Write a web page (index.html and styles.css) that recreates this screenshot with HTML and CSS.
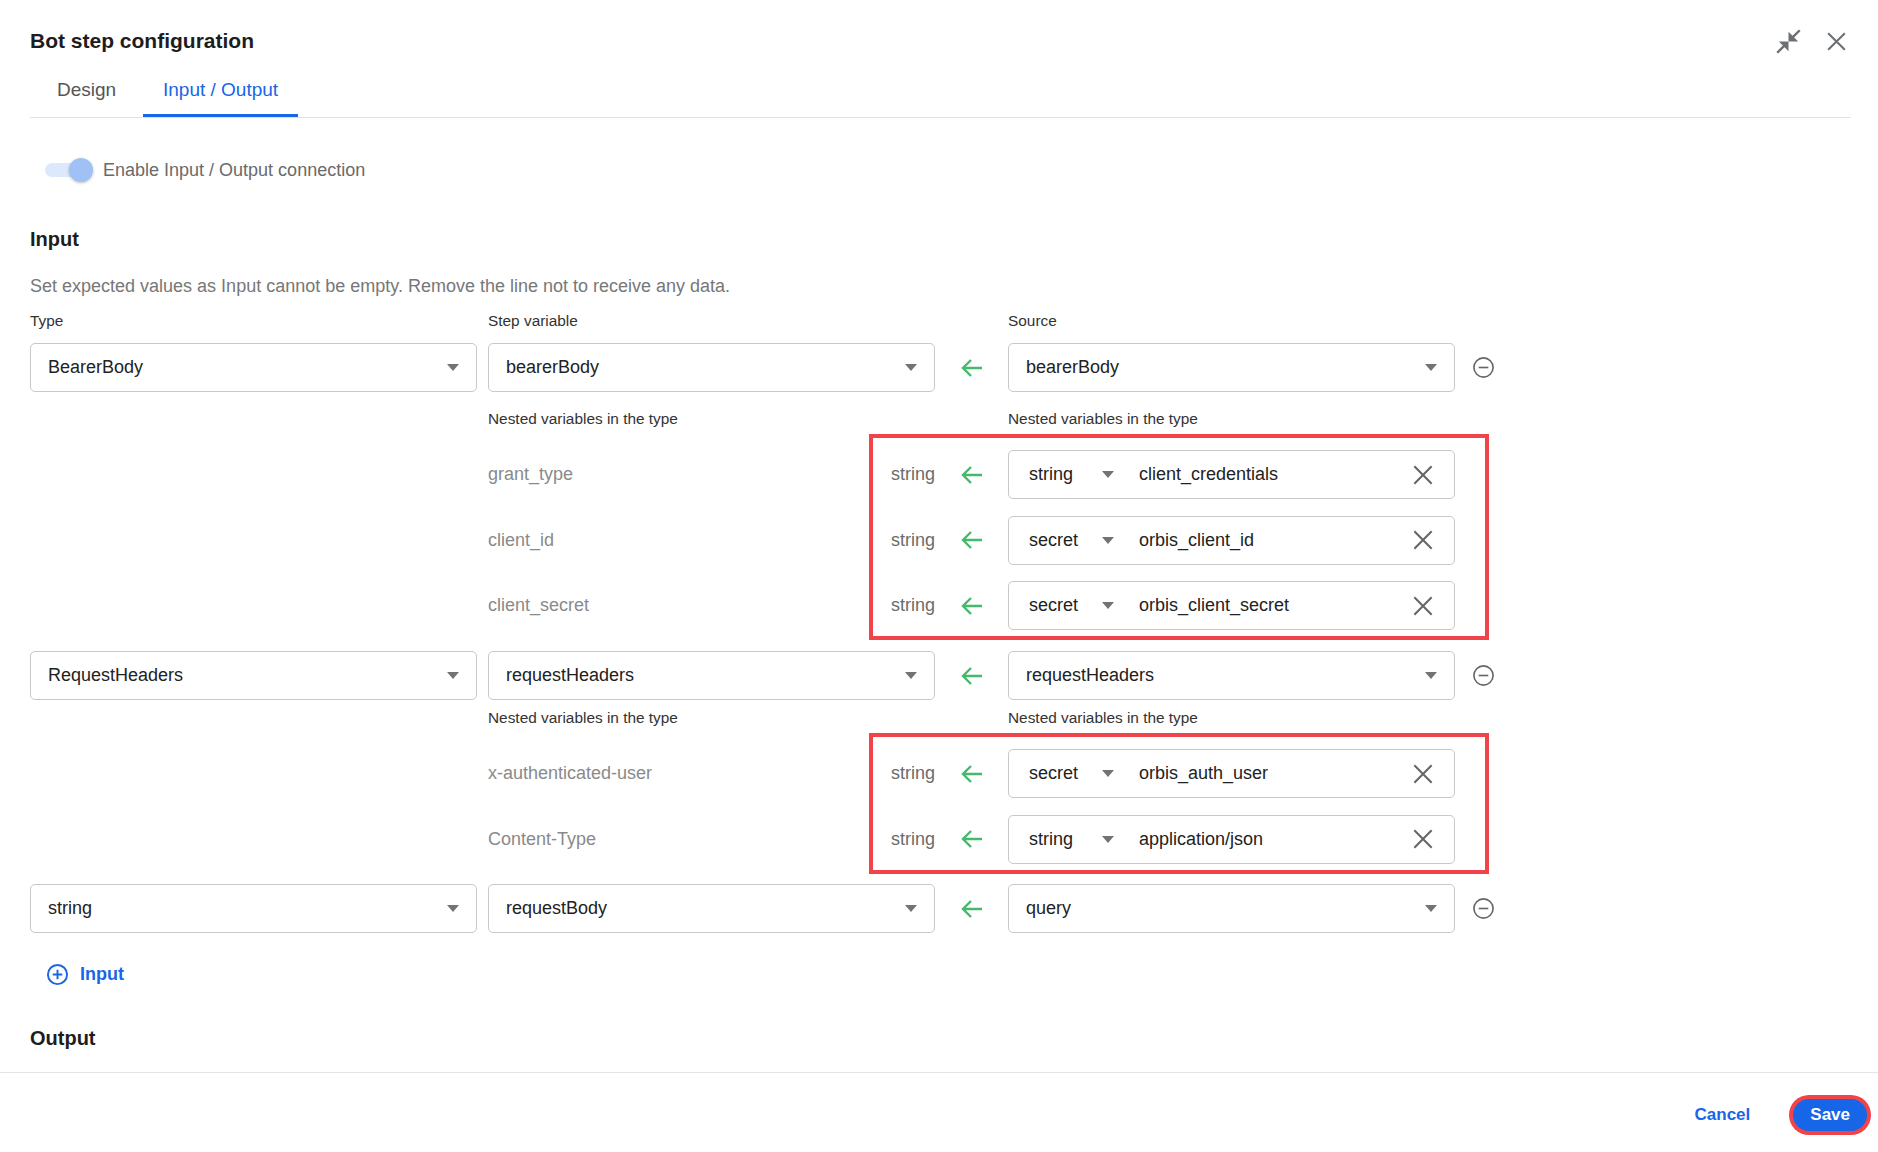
FILE: index.html
```html
<!DOCTYPE html>
<html lang="en">
<head>
  <meta charset="UTF-8">
  <title>Bot step configuration</title>
  <link rel="stylesheet" href="styles.css">
</head>
<body>
  <div class="dialog">
    <div class="content">
      <div class="header">
        <h1>Bot step configuration</h1>
        <div class="header-actions">
          <svg class="icon-compress" viewBox="0 0 24 24"><path d="M22 3.41L16.71 8.7 20 12h-8V4l3.29 3.29L20.59 2 22 3.41zM3.41 22l5.29-5.29L12 20v-8H4l3.29 3.29L2 20.59 3.41 22z"/></svg>
          <svg class="icon-close" viewBox="0 0 24 24"><path d="M4 4L20 20M20 4L4 20"/></svg>
        </div>
      </div>

      <div class="tabs">
        <div class="tab">Design</div>
        <div class="tab active">Input / Output</div>
      </div>

      <div class="toggle-row">
        <span class="toggle"><span class="knob"></span></span>
        <span class="toggle-label">Enable Input / Output connection</span>
      </div>

      <h2>Input</h2>
      <p class="hint">Set expected values as Input cannot be empty. Remove the line not to receive any data.</p>

      <div class="io-row io-head">
        <span>Type</span>
        <span>Step variable</span>
        <span></span>
        <span>Source</span>
        <span></span>
      </div>

      <!-- BearerBody -->
      <div class="io-row main-row">
        <div class="select"><span>BearerBody</span><i class="caret"></i></div>
        <div class="select"><span>bearerBody</span><i class="caret"></i></div>
        <svg class="arrow" viewBox="0 0 22 20"><path d="M21 10H2M10 2L2 10l8 8"/></svg>
        <div class="select"><span>bearerBody</span><i class="caret"></i></div>
        <svg class="remove" viewBox="0 0 24 24"><circle cx="12" cy="12" r="10"/><path d="M7 12h10"/></svg>
      </div>

      <div class="nested">
        <div class="io-row nested-head">
          <span></span>
          <span>Nested variables in the type</span>
          <span></span>
          <span>Nested variables in the type</span>
          <span></span>
        </div>
        <div class="io-row nested-row">
          <span></span>
          <div class="var"><span class="var-name">grant_type</span><span class="var-type">string</span></div>
          <svg class="arrow" viewBox="0 0 22 20"><path d="M21 10H2M10 2L2 10l8 8"/></svg>
          <div class="field">
            <span class="kind">string</span><i class="caret"></i>
            <span class="value">client_credentials</span>
            <svg class="clear" viewBox="0 0 24 24"><path d="M4 4L20 20M20 4L4 20"/></svg>
          </div>
          <span></span>
        </div>
        <div class="io-row nested-row">
          <span></span>
          <div class="var"><span class="var-name">client_id</span><span class="var-type">string</span></div>
          <svg class="arrow" viewBox="0 0 22 20"><path d="M21 10H2M10 2L2 10l8 8"/></svg>
          <div class="field">
            <span class="kind">secret</span><i class="caret"></i>
            <span class="value">orbis_client_id</span>
            <svg class="clear" viewBox="0 0 24 24"><path d="M4 4L20 20M20 4L4 20"/></svg>
          </div>
          <span></span>
        </div>
        <div class="io-row nested-row">
          <span></span>
          <div class="var"><span class="var-name">client_secret</span><span class="var-type">string</span></div>
          <svg class="arrow" viewBox="0 0 22 20"><path d="M21 10H2M10 2L2 10l8 8"/></svg>
          <div class="field">
            <span class="kind">secret</span><i class="caret"></i>
            <span class="value">orbis_client_secret</span>
            <svg class="clear" viewBox="0 0 24 24"><path d="M4 4L20 20M20 4L4 20"/></svg>
          </div>
          <span></span>
        </div>
        <div class="mark"></div>
      </div>

      <!-- RequestHeaders -->
      <div class="io-row main-row">
        <div class="select"><span>RequestHeaders</span><i class="caret"></i></div>
        <div class="select"><span>requestHeaders</span><i class="caret"></i></div>
        <svg class="arrow" viewBox="0 0 22 20"><path d="M21 10H2M10 2L2 10l8 8"/></svg>
        <div class="select"><span>requestHeaders</span><i class="caret"></i></div>
        <svg class="remove" viewBox="0 0 24 24"><circle cx="12" cy="12" r="10"/><path d="M7 12h10"/></svg>
      </div>

      <div class="nested nested-tight">
        <div class="io-row nested-head">
          <span></span>
          <span>Nested variables in the type</span>
          <span></span>
          <span>Nested variables in the type</span>
          <span></span>
        </div>
        <div class="io-row nested-row">
          <span></span>
          <div class="var"><span class="var-name">x-authenticated-user</span><span class="var-type">string</span></div>
          <svg class="arrow" viewBox="0 0 22 20"><path d="M21 10H2M10 2L2 10l8 8"/></svg>
          <div class="field">
            <span class="kind">secret</span><i class="caret"></i>
            <span class="value">orbis_auth_user</span>
            <svg class="clear" viewBox="0 0 24 24"><path d="M4 4L20 20M20 4L4 20"/></svg>
          </div>
          <span></span>
        </div>
        <div class="io-row nested-row">
          <span></span>
          <div class="var"><span class="var-name">Content-Type</span><span class="var-type">string</span></div>
          <svg class="arrow" viewBox="0 0 22 20"><path d="M21 10H2M10 2L2 10l8 8"/></svg>
          <div class="field">
            <span class="kind">string</span><i class="caret"></i>
            <span class="value">application/json</span>
            <svg class="clear" viewBox="0 0 24 24"><path d="M4 4L20 20M20 4L4 20"/></svg>
          </div>
          <span></span>
        </div>
        <div class="mark"></div>
      </div>

      <!-- requestBody -->
      <div class="io-row main-row last-row">
        <div class="select"><span>string</span><i class="caret"></i></div>
        <div class="select"><span>requestBody</span><i class="caret"></i></div>
        <svg class="arrow" viewBox="0 0 22 20"><path d="M21 10H2M10 2L2 10l8 8"/></svg>
        <div class="select"><span>query</span><i class="caret"></i></div>
        <svg class="remove" viewBox="0 0 24 24"><circle cx="12" cy="12" r="10"/><path d="M7 12h10"/></svg>
      </div>

      <div class="add-input">
        <svg class="icon-add" viewBox="0 0 24 24"><circle cx="12" cy="12" r="10"/><path d="M12 7v10M7 12h10"/></svg>
        <span>Input</span>
      </div>

      <h2 class="output-title">Output</h2>
    </div>

    <div class="footer">
      <button class="btn-cancel">Cancel</button>
      <button class="btn-save">Save</button>
    </div>
  </div>
</body>
</html>
```

FILE: styles.css
```css
* {
  box-sizing: border-box;
}

body {
  margin: 0;
  font-family: 'Liberation Sans', Arial, sans-serif;
  color: #222;
  background: #fff;
}

.dialog {
  height: 1152px;
  display: flex;
  flex-direction: column;
}

.content {
  flex: 1;
  overflow: hidden;
  padding: 29px 27px 0 30px;
}

/* header */

.header {
  display: flex;
  justify-content: space-between;
  align-items: center;
  height: 24px;
}

h1 {
  margin: 0;
  font-size: 21px;
  line-height: 24px;
  font-weight: bold;
  color: #1d1d1d;
}

.header-actions {
  display: flex;
  align-items: center;
  gap: 21px;
  margin-right: 2px;
}

.icon-compress {
  width: 29px;
  height: 29px;
  fill: #6c7075;
}

.icon-close {
  width: 25px;
  height: 25px;
  fill: none;
  stroke: #6c7075;
  stroke-width: 2;
}

/* tabs */

.tabs {
  display: flex;
  margin-top: 12px;
  border-bottom: 1px solid #e2e2e2;
}

.tab {
  min-width: 113px;
  padding: 14px 20px 13px;
  line-height: 22px;
  font-size: 19px;
  text-align: center;
  color: #555;
  border-bottom: 3px solid transparent;
}

.tab.active {
  color: #1766e8;
  border-bottom-color: #1766e8;
}

/* toggle */

.toggle-row {
  display: flex;
  align-items: center;
  margin-top: 40px;
  height: 24px;
}

.toggle {
  position: relative;
  width: 46px;
  height: 14px;
  margin-left: 15px;
  border-radius: 7px;
  background: #dce8fc;
}

.knob {
  position: absolute;
  right: -2px;
  top: -5px;
  width: 24px;
  height: 24px;
  border-radius: 50%;
  background: #9fc1f6;
  box-shadow: 0 1px 3px rgba(0, 0, 0, 0.25);
}

.toggle-label {
  margin-left: 12px;
  font-size: 18px;
  color: #6a6a6a;
}

/* section */

h2 {
  margin: 45px 0 0;
  font-size: 20px;
  line-height: 24px;
  font-weight: bold;
  color: #1d1d1d;
}

.hint {
  margin: 25px 0 0;
  font-size: 18px;
  line-height: 20px;
  color: #777;
}

/* input rows */

.io-row {
  display: grid;
  grid-template-columns: 447px 447px 51px 447px 34px;
  column-gap: 11px;
  align-items: center;
}

.io-head {
  margin-top: 16px;
  font-size: 15.4px;
  line-height: 18px;
  color: #333;
}

.main-row {
  margin-top: 21px;
}

.io-head + .main-row {
  margin-top: 13px;
}

.last-row {
  margin-top: 20.5px;
}

.select,
.field {
  display: flex;
  align-items: center;
  height: 49px;
  border: 1px solid #c8c8c8;
  border-radius: 5px;
  font-size: 18px;
  color: #222;
}

.select {
  justify-content: space-between;
  padding: 0 17px;
}

.caret {
  width: 0;
  height: 0;
  border-left: 6px solid transparent;
  border-right: 6px solid transparent;
  border-top: 7px solid #737373;
}

.arrow {
  justify-self: center;
  width: 22px;
  height: 20px;
  fill: none;
  stroke: #45b96c;
  stroke-width: 2.4;
}

.remove {
  justify-self: center;
  width: 23px;
  height: 23px;
  fill: none;
  stroke: #666;
  stroke-width: 1.7;
}

/* nested variables */

.nested {
  position: relative;
  margin-top: 18px;
}

.nested-tight {
  margin-top: 9px;
}

.nested-head {
  font-size: 15.4px;
  line-height: 18px;
  color: #333;
}

.nested-row {
  margin-top: 16.5px;
}

.nested-head + .nested-row {
  margin-top: 22px;
}

.var {
  display: flex;
  justify-content: space-between;
  font-size: 18px;
}

.var-name {
  color: #8a8a8a;
}

.var-type {
  color: #6b6b6b;
}

.field {
  padding: 0 18px 0 20px;
}

.kind {
  width: 73px;
}

.field .caret {
  margin-right: 25px;
}

.value {
  flex: 1;
}

.clear {
  width: 26px;
  height: 26px;
  fill: none;
  stroke: #666;
  stroke-width: 1.9;
}

.mark {
  position: absolute;
  left: 839px;
  top: 24px;
  bottom: -10px;
  width: 620px;
  border: 4px solid #f0434a;
  pointer-events: none;
}

/* add / output */

.add-input {
  display: flex;
  align-items: center;
  gap: 11px;
  margin-top: 29px;
  padding-left: 16px;
  line-height: 24px;
  font-size: 18px;
  font-weight: bold;
  color: #1766e8;
}

.icon-add {
  width: 23px;
  height: 23px;
  fill: none;
  stroke: #1766e8;
  stroke-width: 2;
}

.output-title {
  margin-top: 40px;
}

/* footer */

.footer {
  height: 80px;
  border-top: 1px solid #e4e4e4;
  display: flex;
  justify-content: flex-end;
  align-items: center;
  gap: 43px;
  padding: 5px 11px 0 0;
}

.footer button {
  font-family: 'Liberation Sans', Arial, sans-serif;
  font-size: 17px;
  font-weight: bold;
  border: none;
  cursor: pointer;
}

.btn-cancel {
  background: none;
  color: #1766e8;
  padding: 0;
}

.btn-save {
  height: 32px;
  padding: 0 17px;
  border-radius: 16px;
  background: #1766e8;
  color: #fff;
  box-shadow: 0 0 0 4px #f0434a;
}
```
